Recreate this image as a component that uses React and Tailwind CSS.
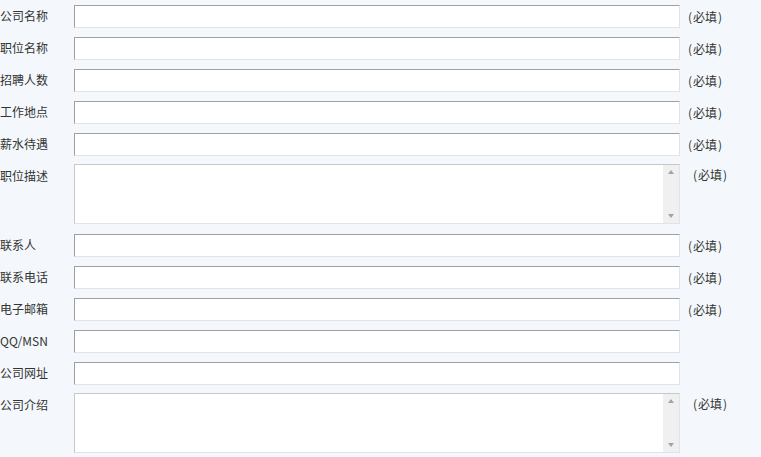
import React from 'react';

const rows = [
  { label: '公司名称', req: true },
  { label: '职位名称', req: true },
  { label: '招聘人数', req: true },
  { label: '工作地点', req: true },
  { label: '薪水待遇', req: true },
  { label: '职位描述', req: true, area: true },
  { label: '联系人', req: true },
  { label: '联系电话', req: true },
  { label: '电子邮箱', req: true },
  { label: 'QQ/MSN', req: false },
  { label: '公司网址', req: false },
  { label: '公司介绍', req: true, area: true },
];

const Required = ({ className }) => (
  <div className={`pt-[4px] text-[12px] leading-[16px] text-[#333] ${className}`}>
    <span className="inline-block w-[6px] text-center">(</span>必填<span className="inline-block w-[6px] text-center">)</span>
  </div>
);

const Field = ({ label, req }) => (
  <div className="flex items-start h-[32px]">
    <div className="w-[74px] pt-[3px] text-[12px] leading-[16px] text-[#333]">{label}</div>
    <div className="w-[606px] h-[23px] bg-white border border-t-[#a0a0a0] border-l-[#a0a0a0] border-r-[#e2e3ea] border-b-[#e2e3ea]" />
    {req && <Required className="ml-[7px]" />}
  </div>
);

const Area = ({ label, req }) => (
  <div className="flex items-start h-[70px] -mt-[1px]">
    <div className="w-[74px] pt-[4px] text-[12px] leading-[16px] text-[#333]">{label}</div>
    <div className="w-[606px] h-[60px] flex bg-white border border-t-[#c8c8c8] border-l-[#c8c8c8] border-r-[#e2e3ea] border-b-[#e2e3ea]">
      <div className="flex-1" />
      <div className="w-[16px] bg-[#f0f0f0] flex flex-col items-center justify-between py-[5px]">
        <div className="w-0 h-0 border-l-[3px] border-r-[3px] border-b-[4px] border-l-transparent border-r-transparent border-b-[#a3a3a3]" />
        <div className="w-0 h-0 border-l-[3px] border-r-[3px] border-t-[4px] border-l-transparent border-r-transparent border-t-[#a3a3a3]" />
      </div>
    </div>
    {req && <Required className="ml-[12px] !pt-[3px]" />}
  </div>
);

const App = () => {
  return (
    <div
      className="w-[761px] h-[457px] overflow-hidden bg-[#f4f8fc] pt-[5px]"
      style={{ fontFamily: '"Noto Sans CJK SC", "Liberation Sans", sans-serif' }}
    >
      {rows.map((r) => (r.area ? <Area key={r.label} {...r} /> : <Field key={r.label} {...r} />))}
    </div>
  );
};

export default App;
